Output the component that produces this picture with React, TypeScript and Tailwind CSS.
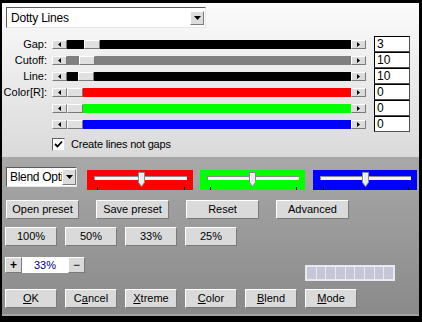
import React from 'react';

type Row = { label: string; color: string; thumb: number; value: string };

const rows: Row[] = [
    { label: 'Gap:', color: 'bg-black', thumb: 17, value: '3' },
    { label: 'Cutoff:', color: 'bg-[#808080]', thumb: 12, value: '10' },
    { label: 'Line:', color: 'bg-black', thumb: 11, value: '10' },
    { label: 'Color[R]:', color: 'bg-[#ff0000]', thumb: 0, value: '0' },
    { label: '', color: 'bg-[#00ff00]', thumb: 0, value: '0' },
    { label: '', color: 'bg-[#0000ff]', thumb: 0, value: '0' },
];

const bevel = 'border border-t-white border-l-white border-r-[#7a7a7a] border-b-[#7a7a7a]';

function ArrowBtn({ dir }: { dir: 'l' | 'r' }) {
    return (
        <div className={`flex h-[9px] w-[15px] items-center justify-center bg-[#dcdcdc] ${bevel}`}>
            <svg width="3" height="5" viewBox="0 0 3 5">
                {dir === 'l' ? <path d="M3 0V5L0 2.5Z" fill="black" /> : <path d="M0 0V5L3 2.5Z" fill="black" />}
            </svg>
        </div>
    );
}

function Slider({ row }: { row: Row }) {
    return (
        <div className="flex h-[16px] items-center">
            <div className="w-[45px] text-right text-[11px] leading-none text-black">{row.label}</div>
            <div className="ml-[5px] flex h-[9px] w-[314px]">
                <ArrowBtn dir="l" />
                <div className={`flex flex-1 ${row.color}`}>
                    <div style={{ width: row.thumb }} />
                    <div className={`h-full w-[16px] bg-[#e0e0e0] ${bevel}`} />
                </div>
                <ArrowBtn dir="r" />
            </div>
            <div className="ml-[8px] h-[16px] w-[36px] border border-t-black border-l-black border-r-[#505050] border-b-[#505050] bg-white pl-[2px] text-[12px] leading-[14px] text-black">
                {row.value}
            </div>
        </div>
    );
}

function Thumb() {
    return (
        <svg width="7" height="15" viewBox="0 0 7 15" className="absolute top-[2px]">
            <path d="M0.5 0.5H6.5V10.5L3.5 14.5L0.5 10.5Z" fill="#ececec" stroke="#8a8a8a" />
            <path d="M1.5 1.5V10" stroke="white" />
        </svg>
    );
}

function ColorBox({ bg, w, thumb }: { bg: string; w: string; thumb: number }) {
    return (
        <div className={`relative mt-[3px] h-[20px] ${w} ${bg}`}>
            <div className="absolute left-[7px] right-[6px] top-[6px] h-[4px] border-t border-l border-[#8a8a8a] border-b-[#f0f0f0] border-r-[#f0f0f0] bg-[#f4f4f4]" />
            <div className="absolute left-[10px] top-[17px] h-[3px] w-px bg-black" />
            <div className="absolute right-[8px] top-[17px] h-[3px] w-px bg-black" />
            <div className="absolute top-0" style={{ left: thumb }}>
                <Thumb />
            </div>
        </div>
    );
}

function Btn({ children, w = 'w-[52px]' }: { children: React.ReactNode; w?: string }) {
    return (
        <div className={`flex h-[19px] ${w} items-center justify-center bg-[#dadada] text-[11px] leading-none text-black ${bevel} border-r-[#5a5a5a] border-b-[#5a5a5a]`}>
            {children}
        </div>
    );
}

export default function App() {
    return (
        <div className="h-[322px] w-[422px] bg-black pb-[6px] pl-[2px] pr-[3px] pt-[3px] font-['Liberation_Sans',Arial,sans-serif]">
            <div className="flex h-full flex-col">
                {/* upper panel */}
                <div className="flex h-[154px] flex-col bg-gradient-to-b from-[#fbfbfb] to-[#dadada]">
                    <div className="ml-[4px] mt-[4px] flex h-[21px] w-[200px] items-center border border-t-[#5a5a5a] border-l-[#5a5a5a] border-r-[#e8e8e8] border-b-[#e8e8e8] bg-white">
                        <span className="flex-1 pl-[4px] text-[12px] leading-none tracking-[-0.2px] text-black">Dotty Lines</span>
                        <div className={`mr-[1px] flex h-[14px] w-[14px] items-center justify-center bg-[#dcdcdc] ${bevel}`}>
                            <svg width="7" height="4" viewBox="0 0 7 4">
                                <path d="M0 0H7L3.5 4Z" fill="black" />
                            </svg>
                        </div>
                    </div>

                    <div className="mt-[8px] flex flex-col">
                        {rows.map((r, i) => (
                            <Slider key={i} row={r} />
                        ))}
                    </div>

                    <div className="ml-[50px] mt-[6px] flex items-center">
                        <div className="flex h-[13px] w-[13px] items-center justify-center border border-t-[#606060] border-l-[#606060] border-r-[#e0e0e0] border-b-[#e0e0e0] bg-white">
                            <svg width="9" height="9" viewBox="0 0 9 9">
                                <path d="M1 4L3.5 6.5L8 1.5" stroke="black" strokeWidth="1.8" fill="none" />
                            </svg>
                        </div>
                        <span className="ml-[6px] text-[11px] leading-none tracking-[-0.2px] text-black">Create lines not gaps</span>
                    </div>
                </div>

                {/* lower panel */}
                <div className="flex flex-1 flex-col border-b-[2px] border-[#a4a4a4] bg-gradient-to-b from-[#a8a8a8] to-[#8a8a8a]">
                    <div className="mt-[10px] flex items-start">
                        <div className="ml-[4px] flex h-[20px] w-[71px] items-center border border-t-[#5a5a5a] border-l-[#5a5a5a] border-r-[#e8e8e8] border-b-[#e8e8e8] bg-white">
                            <span className="w-[55px] overflow-hidden whitespace-nowrap pl-[3px] text-[12px] leading-none tracking-[-0.3px] text-black">Blend Options</span>
                            <div className={`flex h-[16px] w-[14px] items-center justify-center bg-[#dcdcdc] ${bevel}`}>
                                <svg width="7" height="4" viewBox="0 0 7 4">
                                    <path d="M0 0H7L3.5 4Z" fill="black" />
                                </svg>
                            </div>
                        </div>
                        <div className="ml-[10px]">
                            <ColorBox bg="bg-[#ff0000]" w="w-[106px]" thumb={51} />
                        </div>
                        <div className="ml-[7px]">
                            <ColorBox bg="bg-[#00ff00]" w="w-[105px]" thumb={49} />
                        </div>
                        <div className="ml-[8px]">
                            <ColorBox bg="bg-[#0000ff]" w="w-[104px]" thumb={49} />
                        </div>
                    </div>

                    <div className="ml-[4px] mt-[10px] flex gap-[17px]">
                        <Btn w="w-[73px]">Open preset</Btn>
                        <Btn w="w-[73px]">Save preset</Btn>
                        <Btn w="w-[73px]">Reset</Btn>
                        <Btn w="w-[73px]">Advanced</Btn>
                    </div>

                    <div className="ml-[3px] mt-[8px] flex gap-[8px]">
                        <Btn>100%</Btn>
                        <Btn>50%</Btn>
                        <Btn>33%</Btn>
                        <Btn>25%</Btn>
                    </div>

                    <div className="ml-[3px] mt-[11px] flex items-start">
                        <div className={`flex h-[16px] w-[17px] items-center justify-center bg-[#dadada] text-[12px] font-bold leading-none text-black ${bevel}`}>+</div>
                        <div className="flex h-[16px] w-[46px] items-center justify-center bg-white text-[11px] leading-none text-[#000080]">33%</div>
                        <div className={`flex h-[16px] w-[17px] items-center justify-center bg-[#dadada] text-[12px] leading-none text-black ${bevel}`}>−</div>
                        <div className="ml-[220px] mt-[8px] flex h-[16px] w-[90px] gap-[1px] border border-[#e8e8f0] bg-[#e8e8f0] p-[1px]">
                            {Array.from({ length: 9 }).map((_, i) => (
                                <div key={i} className="flex-1 bg-[#c6c6d6]" />
                            ))}
                        </div>
                    </div>

                    <div className="ml-[3px] mt-[8px] flex gap-[8px]">
                        <Btn><span className="underline">O</span>K</Btn>
                        <Btn>C<span className="underline">a</span>ncel</Btn>
                        <Btn><span className="underline">X</span>treme</Btn>
                        <Btn><span className="underline">C</span>olor</Btn>
                        <Btn><span className="underline">B</span>lend</Btn>
                        <Btn><span className="underline">M</span>ode</Btn>
                    </div>
                </div>
            </div>
        </div>
    );
}
